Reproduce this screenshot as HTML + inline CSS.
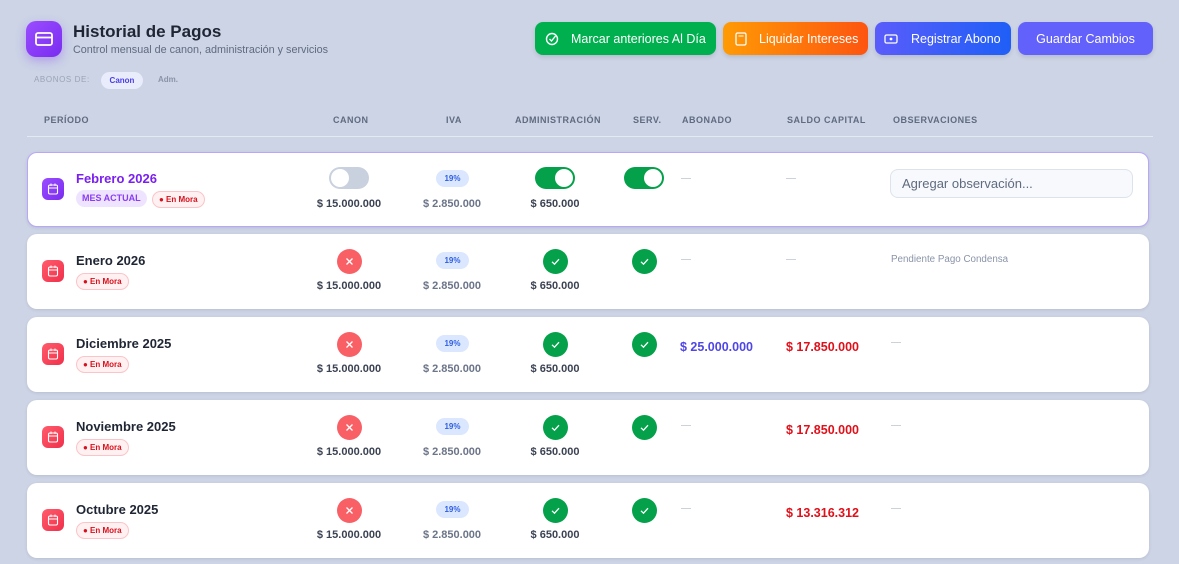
<!DOCTYPE html>
<html><head><meta charset="utf-8"><style>
*{box-sizing:border-box;margin:0;padding:0}
body{width:1179px;height:564px;overflow:hidden;background:#ccd4e6;font-family:"Liberation Sans",sans-serif;position:relative}
.a{position:absolute}
.btn{position:absolute;top:22px;height:33px;border-radius:8px;color:#fff;font-size:12.5px;display:flex;align-items:center;box-shadow:0 2px 5px rgba(0,0,0,.12)}
.th{position:absolute;top:115px;font-size:9px;font-weight:bold;color:#5f6b80;letter-spacing:.5px}
.card{position:absolute;left:27px;width:1122px;height:75px;background:#fff;border-radius:10px;box-shadow:0 1px 3px rgba(0,0,0,.1)}
.ic{position:absolute;left:15px;top:26px;width:22px;height:22px;border-radius:6px;background:linear-gradient(135deg,#ff5c6c,#f0304a)}
.ic svg{position:absolute;left:5px;top:5px}
.name{position:absolute;left:49px;top:19px;font-size:13px;font-weight:bold;color:#1f2533}
.mora{position:absolute;top:39px;height:17px;border:1px solid #fbc4c8;background:#fff0f1;border-radius:9px;color:#d6101c;font-size:8px;font-weight:bold;padding:0 6px;line-height:15px}
.amt{position:absolute;top:46px;font-size:11px;font-weight:bold;color:#3b4252;width:120px;text-align:center}
.iva{position:absolute;left:409px;top:18px;width:33px;height:17px;background:#dbe7ff;border-radius:9px;color:#2f5fe0;font-size:8px;font-weight:bold;text-align:center;line-height:17px}
.x,.ok{position:absolute;top:15px;width:25px;height:25px;border-radius:50%}
.x{left:310px;background:#f86066}
.ok{background:#05a14a}
.x svg,.ok svg{position:absolute;left:0;top:0}
.dash{position:absolute;top:25px;width:10px;height:1px;background:#cbd2dc}
</style></head><body>
<div class="a" style="left:26px;top:21px;width:36px;height:36px;border-radius:10px;background:linear-gradient(135deg,#9a4dff,#7a2cf0);box-shadow:0 4px 10px rgba(130,60,240,.35)">
<svg width="36" height="36"><rect x="10" y="12" width="16" height="12" rx="2" fill="none" stroke="#fff" stroke-width="1.8"/><line x1="10" y1="16.5" x2="26" y2="16.5" stroke="#fff" stroke-width="1.8"/></svg></div>
<div class="a" style="left:73px;top:22px;font-size:17px;font-weight:bold;color:#1f2533">Historial de Pagos</div>
<div class="a" style="left:73px;top:44px;font-size:10.8px;color:#5f6b80">Control mensual de canon, administración y servicios</div>
<div class="a" style="left:34px;top:75px;font-size:8px;color:#9aa4b6;letter-spacing:.6px">ABONOS DE:</div>
<div class="a" style="left:101px;top:72px;width:42px;height:17px;border-radius:9px;background:#e8ecfb;color:#4a3ee8;font-size:8px;font-weight:bold;text-align:center;line-height:17px">Canon</div>
<div class="a" style="left:158px;top:75px;font-size:8px;color:#8a94a8;font-weight:bold">Adm.</div>

<div class="btn" style="left:535px;width:181px;background:#00b04f;padding-left:10px"><svg width="14" height="14" viewBox="0 0 14 14"><circle cx="7" cy="7" r="5.5" fill="none" stroke="#fff" stroke-width="1.4"/><path d="M4.5 7l2 2 4-5" fill="none" stroke="#fff" stroke-width="1.4"/></svg><span style="margin-left:12px">Marcar anteriores Al Día</span></div>
<div class="btn" style="left:723px;width:145px;background:linear-gradient(90deg,#ff9a05,#fd5510);padding-left:12px"><svg width="12" height="14"><rect x="1" y="1" width="10" height="12" rx="1.5" fill="none" stroke="#fff" stroke-width="1.3"/><line x1="3.5" y1="4" x2="8.5" y2="4" stroke="#fff"/></svg><span style="margin-left:12px">Liquidar Intereses</span></div>
<div class="btn" style="left:875px;width:136px;background:linear-gradient(90deg,#5a5cfa,#1f5ff7);padding-left:9px"><svg width="14" height="10"><rect x="1" y="1" width="12" height="8" rx="1.5" fill="none" stroke="#fff" stroke-width="1.3"/><circle cx="7" cy="5" r="1.4" fill="#fff"/></svg><span style="margin-left:13px">Registrar Abono</span></div>
<div class="btn" style="left:1018px;width:135px;background:#6361fb;justify-content:center">Guardar Cambios</div>

<div class="th" style="left:44px">PERÍODO</div>
<div class="th" style="left:333px">CANON</div>
<div class="th" style="left:446px">IVA</div>
<div class="th" style="left:515px">ADMINISTRACIÓN</div>
<div class="th" style="left:633px">SERV.</div>
<div class="th" style="left:682px">ABONADO</div>
<div class="th" style="left:787px">SALDO CAPITAL</div>
<div class="th" style="left:893px">OBSERVACIONES</div>
<div class="a" style="left:27px;top:136px;width:1126px;height:1px;background:#e4e9f2"></div>

<!-- row 1 -->
<div class="card" style="top:152px;border:1px solid #b9a6fb">
<div class="ic" style="left:14px;top:25px;background:linear-gradient(135deg,#9a4dff,#7a2cf0)"><svg width="12" height="12"><rect x="1.5" y="2" width="9" height="9" rx="1.5" fill="none" stroke="#fff" stroke-width="1.1"/><line x1="1.5" y1="5" x2="10.5" y2="5" stroke="#fff"/><line x1="4" y1="0.5" x2="4" y2="3" stroke="#fff"/><line x1="8" y1="0.5" x2="8" y2="3" stroke="#fff"/></svg></div>
<div class="name" style="left:48px;top:18px;color:#7a1ff0">Febrero 2026</div>
<div class="a" style="left:48px;top:37px;height:17px;padding:0 6px;border-radius:9px;background:#eee4ff;color:#8a3cf0;font-size:9px;font-weight:bold;line-height:17px">MES ACTUAL</div>
<div class="mora" style="left:124px;top:38px">● En Mora</div>
<div class="a" style="left:301px;top:14px;width:40px;height:22px;border-radius:11px;background:#c9d0de"><div class="a" style="left:2px;top:2px;width:18px;height:18px;border-radius:50%;background:#fff"></div></div>
<div class="amt" style="left:261px;top:45px">$ 15.000.000</div>
<div class="iva" style="left:408px;top:17px">19%</div><div class="amt" style="left:364px;top:45px;color:#6b7488">$ 2.850.000</div>
<div class="a" style="left:507px;top:14px;width:40px;height:22px;border-radius:11px;background:#05a14a"><div class="a" style="left:20px;top:2px;width:18px;height:18px;border-radius:50%;background:#fff"></div></div>
<div class="amt" style="left:467px;top:45px">$ 650.000</div>
<div class="a" style="left:596px;top:14px;width:40px;height:22px;border-radius:11px;background:#05a14a"><div class="a" style="left:20px;top:2px;width:18px;height:18px;border-radius:50%;background:#fff"></div></div>
<div class="dash" style="left:653px"></div><div class="dash" style="left:758px"></div>
<div class="a" style="left:862px;top:16px;width:243px;height:29px;border:1px solid #dde3ec;border-radius:8px;background:#f7f9fc;font-size:13px;color:#5f6b80;padding-left:11px;line-height:27px">Agregar observación...</div>
</div>

<!-- row 2 -->
<div class="card" style="top:234px"><div class="ic"><svg width="12" height="12"><rect x="1.5" y="2" width="9" height="9" rx="1.5" fill="none" stroke="#fff" stroke-width="1.1"/><line x1="1.5" y1="5" x2="10.5" y2="5" stroke="#fff"/><line x1="4" y1="0.5" x2="4" y2="3" stroke="#fff"/><line x1="8" y1="0.5" x2="8" y2="3" stroke="#fff"/></svg></div><div class="name">Enero 2026</div><div class="mora" style="left:49px">● En Mora</div>
<div class="x"><svg width="25" height="25"><path d="M9.5 9.5l6 6M15.5 9.5l-6 6" stroke="#fff" stroke-width="1.3"/></svg></div><div class="amt" style="left:262px">$ 15.000.000</div>
<div class="iva">19%</div><div class="amt" style="left:365px;color:#6b7488">$ 2.850.000</div>
<div class="ok" style="left:516px"><svg width="25" height="25"><path d="M9 12.8l2.5 2.4 4.5-5" fill="none" stroke="#fff" stroke-width="1.3"/></svg></div><div class="amt" style="left:468px">$ 650.000</div><div class="ok" style="left:605px"><svg width="25" height="25"><path d="M9 12.8l2.5 2.4 4.5-5" fill="none" stroke="#fff" stroke-width="1.3"/></svg></div>
<div class="dash" style="left:654px"></div><div class="dash" style="left:759px"></div>
<div class="a" style="left:864px;top:20px;font-size:9.8px;color:#8a94a8">Pendiente Pago Condensa</div></div>

<!-- row 3 -->
<div class="card" style="top:317px"><div class="ic"><svg width="12" height="12"><rect x="1.5" y="2" width="9" height="9" rx="1.5" fill="none" stroke="#fff" stroke-width="1.1"/><line x1="1.5" y1="5" x2="10.5" y2="5" stroke="#fff"/><line x1="4" y1="0.5" x2="4" y2="3" stroke="#fff"/><line x1="8" y1="0.5" x2="8" y2="3" stroke="#fff"/></svg></div><div class="name">Diciembre 2025</div><div class="mora" style="left:49px">● En Mora</div>
<div class="x"><svg width="25" height="25"><path d="M9.5 9.5l6 6M15.5 9.5l-6 6" stroke="#fff" stroke-width="1.3"/></svg></div><div class="amt" style="left:262px">$ 15.000.000</div>
<div class="iva">19%</div><div class="amt" style="left:365px;color:#6b7488">$ 2.850.000</div>
<div class="ok" style="left:516px"><svg width="25" height="25"><path d="M9 12.8l2.5 2.4 4.5-5" fill="none" stroke="#fff" stroke-width="1.3"/></svg></div><div class="amt" style="left:468px">$ 650.000</div><div class="ok" style="left:605px"><svg width="25" height="25"><path d="M9 12.8l2.5 2.4 4.5-5" fill="none" stroke="#fff" stroke-width="1.3"/></svg></div>
<div class="a" style="left:653px;top:23px;font-size:12.5px;font-weight:bold;color:#4f46e5">$ 25.000.000</div>
<div class="a" style="left:759px;top:23px;font-size:12.5px;font-weight:bold;color:#e0101a">$ 17.850.000</div>
<div class="dash" style="left:864px"></div></div>

<!-- row 4 -->
<div class="card" style="top:400px"><div class="ic"><svg width="12" height="12"><rect x="1.5" y="2" width="9" height="9" rx="1.5" fill="none" stroke="#fff" stroke-width="1.1"/><line x1="1.5" y1="5" x2="10.5" y2="5" stroke="#fff"/><line x1="4" y1="0.5" x2="4" y2="3" stroke="#fff"/><line x1="8" y1="0.5" x2="8" y2="3" stroke="#fff"/></svg></div><div class="name">Noviembre 2025</div><div class="mora" style="left:49px">● En Mora</div>
<div class="x"><svg width="25" height="25"><path d="M9.5 9.5l6 6M15.5 9.5l-6 6" stroke="#fff" stroke-width="1.3"/></svg></div><div class="amt" style="left:262px">$ 15.000.000</div>
<div class="iva">19%</div><div class="amt" style="left:365px;color:#6b7488">$ 2.850.000</div>
<div class="ok" style="left:516px"><svg width="25" height="25"><path d="M9 12.8l2.5 2.4 4.5-5" fill="none" stroke="#fff" stroke-width="1.3"/></svg></div><div class="amt" style="left:468px">$ 650.000</div><div class="ok" style="left:605px"><svg width="25" height="25"><path d="M9 12.8l2.5 2.4 4.5-5" fill="none" stroke="#fff" stroke-width="1.3"/></svg></div>
<div class="dash" style="left:654px"></div>
<div class="a" style="left:759px;top:23px;font-size:12.5px;font-weight:bold;color:#e0101a">$ 17.850.000</div>
<div class="dash" style="left:864px"></div></div>

<!-- row 5 -->
<div class="card" style="top:483px"><div class="ic"><svg width="12" height="12"><rect x="1.5" y="2" width="9" height="9" rx="1.5" fill="none" stroke="#fff" stroke-width="1.1"/><line x1="1.5" y1="5" x2="10.5" y2="5" stroke="#fff"/><line x1="4" y1="0.5" x2="4" y2="3" stroke="#fff"/><line x1="8" y1="0.5" x2="8" y2="3" stroke="#fff"/></svg></div><div class="name">Octubre 2025</div><div class="mora" style="left:49px">● En Mora</div>
<div class="x"><svg width="25" height="25"><path d="M9.5 9.5l6 6M15.5 9.5l-6 6" stroke="#fff" stroke-width="1.3"/></svg></div><div class="amt" style="left:262px">$ 15.000.000</div>
<div class="iva">19%</div><div class="amt" style="left:365px;color:#6b7488">$ 2.850.000</div>
<div class="ok" style="left:516px"><svg width="25" height="25"><path d="M9 12.8l2.5 2.4 4.5-5" fill="none" stroke="#fff" stroke-width="1.3"/></svg></div><div class="amt" style="left:468px">$ 650.000</div><div class="ok" style="left:605px"><svg width="25" height="25"><path d="M9 12.8l2.5 2.4 4.5-5" fill="none" stroke="#fff" stroke-width="1.3"/></svg></div>
<div class="dash" style="left:654px"></div>
<div class="a" style="left:759px;top:23px;font-size:12.5px;font-weight:bold;color:#e0101a">$ 13.316.312</div>
<div class="dash" style="left:864px"></div></div>
</body></html>
